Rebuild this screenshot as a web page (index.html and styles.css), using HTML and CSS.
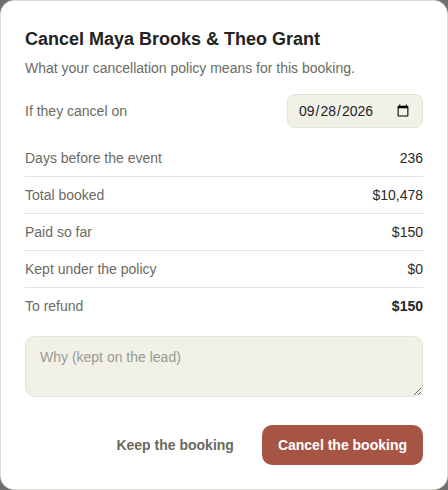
FILE: index.html
```html
<!DOCTYPE html>
<html>
<head>
<meta charset="utf-8">
<link rel="stylesheet" href="styles.css">
</head>
<body>
<div class="dialog">
  <h1 class="title">Cancel Maya Brooks &amp; Theo Grant</h1>
  <p class="sub">What your cancellation policy means for this booking.</p>
  <div class="daterow">
    <span class="label">If they cancel on</span>
    <input class="date" type="date" value="2026-09-28">
  </div>
  <div class="rows">
    <div class="row"><span class="label">Days before the event</span><span class="val">236</span></div>
    <div class="row"><span class="label">Total booked</span><span class="val">$10,478</span></div>
    <div class="row"><span class="label">Paid so far</span><span class="val">$150</span></div>
    <div class="row"><span class="label">Kept under the policy</span><span class="val">$0</span></div>
    <div class="row"><span class="label">To refund</span><span class="val strong">$150</span></div>
  </div>
  <textarea class="why" placeholder="Why (kept on the lead)"></textarea>
  <div class="actions">
    <button class="btn ghost">Keep the booking</button>
    <button class="btn danger">Cancel the booking</button>
  </div>
</div>
</body>
</html>
```
FILE: styles.css
```css
html, body { margin: 0; padding: 0; }
body {
  background: #6f6f6f;
  font-family: "Liberation Sans", Arial, sans-serif;
  width: 448px;
  height: 490px;
  overflow: hidden;
}
.dialog {
  box-sizing: border-box;
  width: 448px;
  height: 490px;
  background: #fff;
  border: 1px solid #dcdcd4;
  border-radius: 14px;
  padding: 25px 24px 24px;
  display: flex;
  flex-direction: column;
}
.title {
  margin: 0;
  font-size: 18px;
  line-height: 26px;
  font-weight: 700;
  color: #222220;
}
.sub {
  margin: 6px 0 0;
  font-size: 14px;
  line-height: 20px;
  color: #6b6b63;
}
.daterow {
  margin-top: 16px;
  display: flex;
  align-items: center;
  justify-content: space-between;
  padding-bottom: 12px;
}
.label { font-size: 14px; color: #6b6b63; }
.date {
  box-sizing: border-box;
  width: 136px;
  height: 34px;
  background: #f1f1e8;
  border: 1px solid #e2e2d8;
  border-radius: 8px;
  padding: 0 10px;
  font-family: "Liberation Sans", Arial, sans-serif;
  font-size: 14px;
  color: #222;
}
.rows { display: flex; flex-direction: column; }
.row {
  display: flex;
  justify-content: space-between;
  align-items: center;
  height: 36px;
  border-bottom: 1px solid #e6e6e0;
}
.row:last-child { border-bottom: none; }
.val { font-size: 14px; color: #2a2a28; }
.val.strong { font-weight: 700; color: #222; }
.why {
  box-sizing: border-box;
  margin-top: 12px;
  width: 100%;
  height: 62px;
  background: #f1f1e8;
  border: 1px solid #e2e2d8;
  border-radius: 10px;
  padding: 11px 14px;
  font-family: "Liberation Sans", Arial, sans-serif;
  font-size: 14px;
  line-height: 18px;
  color: #222;
  resize: vertical;
}
.why::placeholder { color: #9a9a90; }
.actions {
  margin-top: 28px;
  display: flex;
  justify-content: flex-end;
  gap: 12px;
}
.btn {
  height: 40px;
  border: none;
  border-radius: 10px;
  font-family: "Liberation Sans", Arial, sans-serif;
  font-size: 14px;
  font-weight: 700;
  padding: 0 16px;
  cursor: pointer;
}
.ghost { background: transparent; color: #6b6a5c; }
.danger { background: #a65444; color: #fff; }
```
